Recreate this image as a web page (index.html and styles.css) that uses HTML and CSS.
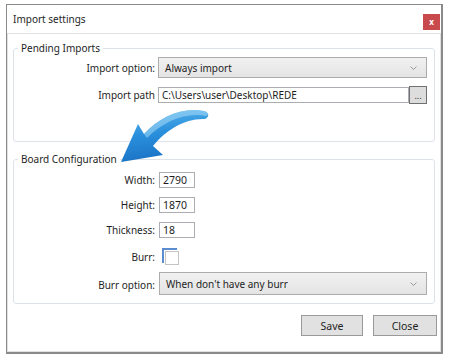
FILE: index.html
```html
<!DOCTYPE html>
<html lang="en">
<head>
    <meta charset="UTF-8">
    <meta name="viewport" content="width=device-width, initial-scale=1.0">
    <title>Import settings</title>
    <link rel="stylesheet" href="styles.css">
</head>
<body>
    <div class="window">
        <div class="titlebar">
            <span class="title">Import settings</span>
            <span class="close">x</span>
        </div>
        <div class="panel">
            <fieldset class="group pending">
                <legend>Pending Imports</legend>
                <div class="row">
                    <label>Import option:</label>
                    <div class="combo combo-small">
                        <span>Always import</span>
                        <svg class="chevron" width="7" height="4" viewBox="0 0 7 4"><polyline points="0.5,0.5 3.5,3.5 6.5,0.5" fill="none" stroke="#9a9a9a" stroke-width="1"/></svg>
                    </div>
                </div>
                <div class="row path-row">
                    <label>Import path</label>
                    <div class="path">
                        <div class="textbox wide">C:\Users\user\Desktop\REDE</div>
                        <div class="browse">...</div>
                    </div>
                </div>
            </fieldset>

            <fieldset class="group board">
                <legend>Board Configuration</legend>
                <div class="row">
                    <label>Width:</label>
                    <div class="textbox num">2790</div>
                </div>
                <div class="row">
                    <label>Height:</label>
                    <div class="textbox num">1870</div>
                </div>
                <div class="row">
                    <label>Thickness:</label>
                    <div class="textbox num">18</div>
                </div>
                <div class="row check-row">
                    <label>Burr:</label>
                    <div class="check"></div>
                </div>
                <div class="row">
                    <label>Burr option:</label>
                    <div class="combo combo-large">
                        <span>When don't have any burr</span>
                        <svg class="chevron" width="7" height="4" viewBox="0 0 7 4"><polyline points="0.5,0.5 3.5,3.5 6.5,0.5" fill="none" stroke="#9a9a9a" stroke-width="1"/></svg>
                    </div>
                </div>
            </fieldset>

            <div class="buttons">
                <button class="save">Save</button>
                <button class="close-btn">Close</button>
            </div>
        </div>

        <!-- callout arrow drawn over the dialog (viewBox in page coordinates) -->
        <svg class="arrow" width="110" height="65" viewBox="107 105 110 65">
            <defs>
                <linearGradient id="arrowFill" x1="0" y1="0" x2="0.25" y2="1">
                    <stop offset="0" stop-color="#62b9ee"/>
                    <stop offset="0.5" stop-color="#2a90dc"/>
                    <stop offset="1" stop-color="#1a72c4"/>
                </linearGradient>
            </defs>
            <path d="M121,162 L138,124 L144,134 C160,117 181,107 204,111 C209,112 210,117 205,119 C185,118 166,130 153,146 L163,155 Z" fill="url(#arrowFill)"/>
            <path d="M144,134 C160,117 181,107 204,111 C209,112 209,115 206,116 C186,112 164,121 147,138 Z" fill="#a6dbf8" opacity="0.55"/>
        </svg>
    </div>
</body>
</html>
```

FILE: styles.css
```css
body {
    margin: 0;
    background-color: white;
    font-family: "Noto Sans", "Open Sans", sans-serif;
    font-size: 10px;
    color: #1e1e1e;
}
.window {
    position: relative;
    box-sizing: border-box;
    margin: 4px 0 0 6px;
    width: 437px;
    height: 350px;
    border: 1px solid #8a8a8a;
    border-right-width: 2px;
    border-bottom-width: 2px;
    display: flex;
    flex-direction: column;
    background-color: white;
}
.titlebar {
    height: 28px;
    display: flex;
    align-items: center;
    justify-content: space-between;
    padding: 0 1px 0 6px;
}
.title {
    font-size: 10px;
    margin-top: -1px;
}
.close {
    width: 17px;
    height: 16px;
    margin-top: 5px;
    background-color: #c94a4d;
    color: white;
    font-size: 8px;
    font-weight: bold;
    line-height: 15px;
    text-align: center;
}
.panel {
    flex: 1;
    border: 1px solid #e0e0e0;
    display: flex;
    flex-direction: column;
}
.group {
    margin: 7px 5px 0 5px;
    padding: 0 7px 0 0;
    border: 1px solid #dde3e8;
    border-radius: 3px;
    display: flex;
    flex-direction: column;
    min-width: 0;
}
.group legend {
    margin-left: 4px;
    padding: 0 3px;
    line-height: 14px;
    font-size: 10px;
}
.row {
    display: grid;
    grid-template-columns: 141px 1fr;
    column-gap: 3px;
    align-items: center;
}
.row label {
    text-align: right;
}
.pending {
    padding-top: 2px;
    padding-bottom: 37px;
}
.path-row {
    margin-top: 8px;
}
.board {
    margin-top: 10px;
    padding-top: 6px;
    padding-bottom: 8px;
    gap: 9px;
}
.board .row {
    column-gap: 4px;
}
.check-row {
    margin-top: 1px;
}
.combo {
    box-sizing: border-box;
    display: flex;
    align-items: center;
    justify-content: space-between;
    padding: 0 9px 0 6px;
    border: 1px solid #acacac;
    background: linear-gradient(#f1f1f1, #e4e4e4);
}
.combo-small {
    height: 21px;
}
.combo-large {
    height: 23px;
    margin-top: -2px;
}
.path {
    display: flex;
    align-items: center;
}
.textbox {
    box-sizing: border-box;
    height: 16px;
    line-height: 14px;
    padding: 0 3px;
    border: 1px solid #abadb3;
    background-color: white;
    white-space: nowrap;
    font-size: 10.5px;
}
.wide {
    flex: 1;
    font-size: 10px;
}
.num {
    width: 36px;
}
.browse {
    box-sizing: border-box;
    width: 18px;
    height: 18px;
    border: 1px solid #707070;
    background-color: #dddddd;
    font-size: 9px;
    line-height: 18px;
    text-align: center;
    color: #333;
}
.check {
    position: relative;
    box-sizing: border-box;
    width: 14px;
    height: 14px;
    margin: 3px 0 0 6px;
    border: 1px solid #c4c4c4;
}
.check::before {
    content: "";
    position: absolute;
    left: -4px;
    top: -4px;
    width: 13px;
    height: 13px;
    border-top: 2px solid #5b8ccf;
    border-left: 2px solid #5b8ccf;
}
.buttons {
    display: flex;
    justify-content: flex-end;
    gap: 10px;
    margin: 11px 3px 0 0;
}
.buttons button {
    height: 21px;
    border: 1px solid #9a9a9a;
    background-color: #e1e1e1;
    font-family: inherit;
    font-size: 10.5px;
    color: #1e1e1e;
    padding: 0;
}
.save {
    width: 62px;
}
.close-btn {
    width: 64px;
}
.arrow {
    position: absolute;
    left: 100px;
    top: 100px;
}
```
